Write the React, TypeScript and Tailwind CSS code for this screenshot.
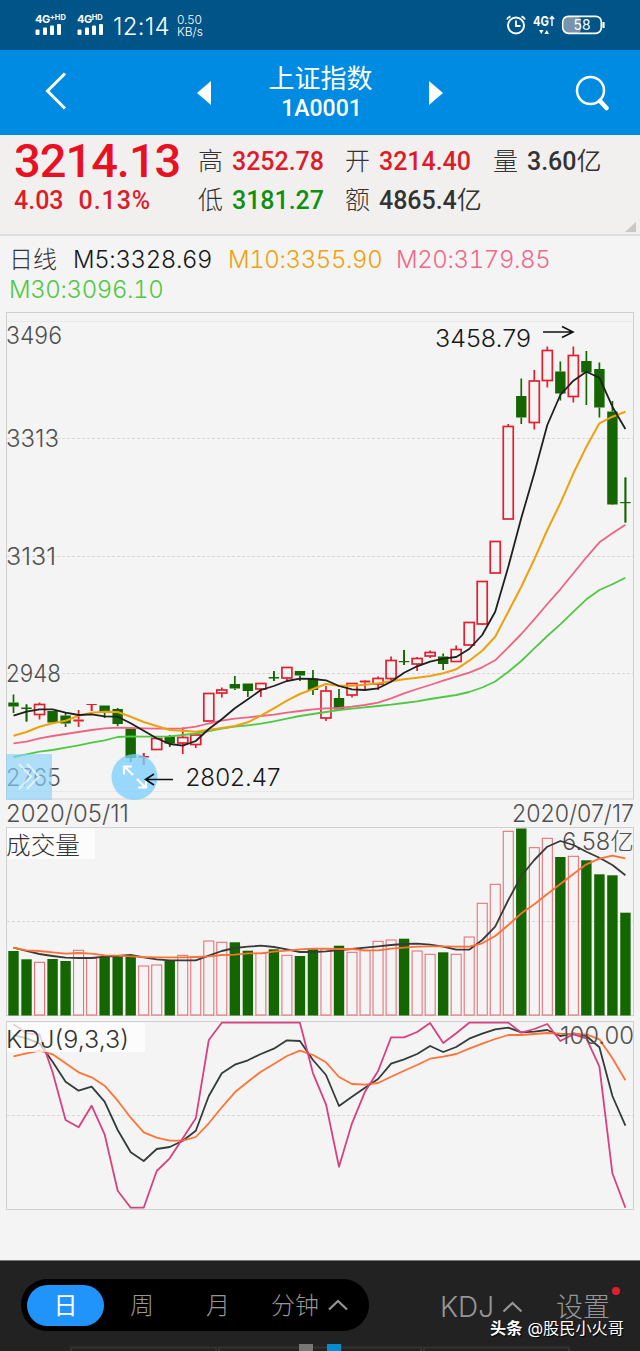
import React from 'react';

const STEP = 13.02;
const xAt = (i: number) => 13.5 + i * STEP;

type Kind = 'g' | 'r';
// [kind, body top, body bottom, high, low]
const candles: [Kind, number, number, number, number][] = [
  ['g', 702.5, 706.5, 694.5, 713], ['g', 707.5, 709, 704.5, 721.5], ['r', 704.5, 714.5, 702.5, 719.5],
  ['g', 711, 722.5, 711, 722.5], ['g', 715.5, 723.5, 712.5, 727], ['r', 719.5, 721.5, 710, 727],
  ['r', 704, 705, 704, 711], ['g', 705.5, 712.5, 705.5, 718], ['g', 709, 724, 708, 726],
  ['g', 728.5, 758, 728.5, 762], ['r', 756, 757.5, 753, 765], ['r', 738.5, 749.5, 738.5, 749.5],
  ['g', 736.5, 743.5, 735, 747], ['r', 737.5, 743, 727.5, 754], ['r', 735, 744.5, 735, 748],
  ['r', 693.5, 721, 693.5, 721], ['r', 690, 693, 687.5, 697.5], ['g', 684, 688.5, 676, 690],
  ['g', 683.5, 691, 683.5, 697], ['r', 683.5, 689, 683.5, 697], ['g', 677, 678.5, 671, 681],
  ['r', 667.5, 678, 667, 681], ['g', 671, 675.5, 671, 681], ['g', 678.5, 690, 670, 695],
  ['r', 691, 718, 686, 721], ['g', 698, 709.5, 689, 709.5], ['r', 683.5, 695, 683.5, 697.5],
  ['r', 680.5, 682.5, 680, 690.5], ['r', 678.5, 684, 676.5, 690], ['r', 660.5, 678.5, 656.5, 682],
  ['g', 661, 662.2, 650, 665], ['r', 658.5, 664, 657, 671], ['r', 652.5, 656, 650.5, 658],
  ['g', 656.5, 664, 653.5, 670], ['r', 649.5, 661.5, 645.5, 661.5], ['r', 622.5, 645, 622.5, 645],
  ['r', 581.5, 624, 581.5, 625], ['r', 541.5, 573, 541.5, 573], ['r', 426.5, 519, 424, 519],
  ['g', 396, 417.5, 378.5, 424], ['r', 381, 422.5, 370, 429.5], ['r', 350.5, 380.5, 346.5, 387.5],
  ['g', 371.5, 393.5, 361.5, 400.5], ['r', 355.5, 396.5, 346.5, 402.5], ['g', 361, 372.5, 351, 405],
  ['g', 369, 407.5, 362.5, 417.5], ['g', 411.5, 504.5, 401, 505], ['g', 502, 503.2, 477.5, 522.5],
];

const ma5 = [715.7, 711.7, 709.3, 709.3, 712.7, 715, 714.3, 716.3, 716.7, 723.3, 730.7, 738.3, 744, 745.7, 741, 729, 719.3, 708.3, 699.3, 690, 686, 681, 678.7, 679, 680.3, 686, 689.3, 690, 688.3, 681.7, 672.7, 666.3, 661.7, 658.7, 657, 649, 635, 611.7, 566.7, 518, 473.3, 425, 395, 380.7, 371.7, 377.7, 406.7, 429];
const ma10 = [735.7, 732, 726.7, 723.3, 720.7, 715.7, 712.7, 711.7, 712, 716.7, 722, 726, 730, 730.7, 731.7, 729.8, 728, 726, 722.3, 715.7, 708.3, 700.7, 694, 689, 684, 685.7, 685.7, 684.7, 683.3, 681.3, 679.3, 677.7, 676, 673.3, 669.3, 660.7, 650.7, 636.7, 611.7, 586.7, 559.3, 530, 503.3, 473.3, 446.7, 423.3, 416.7, 411.7];
const ma20 = [743.3, 741.7, 738.3, 736, 734, 732, 730, 728.3, 727.7, 728, 728.3, 728.7, 728.7, 728.3, 726.7, 723.5, 720.7, 718.7, 717.3, 716, 714.7, 712.7, 711, 709.3, 708.3, 708, 706.7, 705, 702.7, 698.3, 693.3, 689, 685, 680.7, 676.7, 672.7, 667.3, 660.3, 647.3, 634, 619.3, 604, 589.3, 573.3, 557.3, 542.3, 533.3, 524.7];
const ma30 = [757, 754.3, 751.7, 750, 747.7, 745.3, 742.7, 740.3, 737, 736.3, 736.7, 736.7, 736.3, 735, 733.5, 731, 728.7, 726.7, 725.3, 723.7, 721.3, 718.7, 716, 714, 712, 710, 708.7, 707.3, 706, 704.7, 703, 701.3, 699, 697, 695, 692, 687.5, 681.5, 671.7, 661, 648.3, 636, 624.3, 611.7, 599.3, 590, 584.3, 577.7];

const vol = [951, 959.3, 962.3, 959, 961, 950.3, 958.3, 957, 957, 957, 966, 965, 960.3, 955.3, 956.7, 941, 942.3, 942.3, 950.7, 953.3, 949.3, 955.3, 956, 949.3, 949, 945.7, 952.3, 950.7, 941.3, 940, 938.7, 951, 954.3, 952.3, 954.3, 937, 903.3, 884.3, 831.3, 828.5, 847.7, 838.3, 857, 856.3, 860.3, 874.3, 875.3, 912.7];
const volMa5 = [947.7, 951, 954, 956, 957.7, 958, 958, 956.7, 956, 955, 957.3, 959.3, 960.3, 960.3, 960.3, 955.7, 951, 948, 946.7, 945.7, 947, 949.3, 952, 952, 951.3, 950, 949, 947.7, 946.3, 945, 944, 943.7, 944.7, 946.7, 949.7, 949.7, 940, 926.7, 900, 876, 860, 846.7, 841, 845, 851.7, 857.7, 865, 875.3];
const volMa10 = [947.7, 950.3, 951, 952.3, 953.7, 953, 953.7, 955.3, 955.7, 956.3, 957, 957.3, 957.3, 957.3, 957, 956.3, 955, 954.7, 953.3, 953.3, 951.7, 950.7, 949.3, 948.7, 948.7, 949, 949, 950.3, 950.3, 948.7, 947.7, 946.7, 946.3, 946.3, 946.7, 946.7, 943.3, 936, 925, 913.3, 904.3, 894, 884, 874, 864.3, 858.7, 855.7, 858.3];

// Heights in thirds of a pixel, measured from y = 1015
const k = [60, 70, 85, 140, 200, 227, 215, 260, 345, 412, 438, 402, 396, 377, 347, 243, 175, 149, 136, 117, 101, 76, 78, 135, 180, 273, 245, 218, 192, 146, 133, 117, 93, 111, 96, 71, 56, 43, 38, 52, 50, 45, 63, 55, 63, 97, 243, 332];
const d = [124, 115, 107, 118, 145, 172, 187, 212, 257, 308, 352, 368, 377, 377, 366, 325, 277, 232, 200, 170, 147, 123, 107, 120, 142, 186, 207, 209, 204, 185, 167, 150, 131, 125, 117, 101, 86, 72, 60, 60, 57, 54, 56, 57, 58, 73, 130, 196];
const j = [28, 55, 58, 172, 315, 337, 272, 358, 527, 578, 578, 468, 430, 370, 310, 75, 23, 23, 23, 23, 23, 23, 23, 175, 268, 455, 325, 230, 168, 67, 67, 51, 24, 84, 55, 23, 23, 23, 23, 53, 42, 27, 78, 58, 70, 155, 475, 578];
const kdjY = (v: number) => 1015 + v / 3;

const GREEN = '#146600';
const RED = '#e0202f';

function Line({ ys, color, w = 1.8 }: { ys: number[]; color: string; w?: number }) {
  return <polyline points={ys.map((y, i) => `${xAt(i).toFixed(1)},${y.toFixed(1)}`).join(' ')} fill="none" stroke={color} strokeWidth={w} strokeLinejoin="round" />;
}

function Frame({ y, h, grid }: { y: number; h: number; grid: number[] }) {
  return (
    <>
      <rect x="6.5" y={y} width="627" height={h} fill="none" stroke="#d0d0d0" />
      {grid.map((g) => <line key={g} x1="7" x2="633" y1={g} y2={g} stroke="#d8d8d8" strokeDasharray="3 2" />)}
    </>
  );
}

function Label({ x, y, w, fill = '#505050', children, size = 24 }: { x: number; y: number; w: number; fill?: string; children: string; size?: number }) {
  return <text x={x} y={y} fontSize={size} fill={fill} textLength={w} lengthAdjust="spacingAndGlyphs">{children}</text>;
}

function PriceChart() {
  return (
    <svg className="block h-[517px] w-[640px] font-light" viewBox="0 310 640 517">
      <Frame y={312.5} h={486.5} grid={[438.5, 556.5, 673.5]} />
      <path d="M7 321.5H633M7 791.5H633" stroke="#e9e9e9" />
      <Label x={6} y={344} w={56}>3496</Label>
      <Label x={6} y={447} w={53}>3313</Label>
      <Label x={6} y={565} w={50}>3131</Label>
      <Label x={6} y={682} w={55}>2948</Label>
      <Label x={6} y={786} w={55}>2765</Label>
      {candles.map(([c, t, b, hi, lo], i) => {
        const x = xAt(i);
        const s = c === 'g' ? GREEN : RED;
        const hollow = c === 'r' && b - t > 2.6;
        return (
          <g key={i}>
            <path d={`M${x} ${hi}V${t}M${x} ${b}V${lo}`} stroke={s} strokeWidth="1.7" />
            {hollow
              ? <rect x={x - 5} y={t} width="10" height={b - t} fill="none" stroke={s} strokeWidth="1.7" />
              : <rect x={x - 5.2} y={t} width="10.4" height={b - t} fill={s} />}
            {b - t <= 1.6 && <path d={`M${x} ${hi}V${lo}`} stroke={s} strokeWidth="1.7" />}
          </g>
        );
      })}
      <Line ys={ma30} color="#50c843" />
      <Line ys={ma20} color="#ee6584" />
      <Line ys={ma10} color="#eda10c" w={2} />
      <Line ys={ma5} color="#202020" />
      <Label x={435} y={347} w={96} fill="#181818">3458.79</Label>
      <path d="M543 332H573M562 326.5L573 332L562 337.5" fill="none" stroke="#111" strokeWidth="1.6" />
      <Label x={185.5} y={786} w={95} fill="#181818">2802.47</Label>
      <rect x="6" y="754" width="46" height="46" fill="#8ad3fc" fillOpacity=".65" />
      <circle cx="134.5" cy="777" r="23" fill="#7dd0fd" fillOpacity=".78" />
      <path d="M19 764L31 776.5L19 789M27 764L39 776.5L27 789" fill="none" stroke="#e9f7ff" strokeWidth="2" strokeOpacity=".8" />
      <path d="M125 767L133 775M137 779L145 787M124 774.5V766.5H132M146 779.5V787.5H138" fill="none" stroke="#fff" strokeWidth="2.2" />
      <path d="M173 779.5H146M154 774L145.5 779.5L154 785" fill="none" stroke="#111" strokeWidth="1.6" />
      <Label x={6} y={822} w={123}>2020/05/11</Label>
      <Label x={512} y={822} w={122}>2020/07/17</Label>
    </svg>
  );
}

function VolumeChart() {
  return (
    <svg className="block h-[192px] w-[640px] font-light" viewBox="0 827 640 192">
      <Frame y={827.5} h={188} grid={[921.5]} />
      <rect x="7" y="828" width="88" height="31" fill="#fff" fillOpacity=".75" />
      <Label x={6} y={854} w={74} fill="#333">成交量</Label>
      <Label x={562} y={850} w={72}>6.58亿</Label>
      {vol.map((t, i) => candles[i][0] === 'g'
        ? <rect key={i} x={xAt(i) - 5.2} y={t} width="10.4" height={1015.5 - t} fill={GREEN} />
        : <rect key={i} x={xAt(i) - 5} y={t} width="10" height={1015 - t} fill="none" stroke="#e5686e" />)}
      <Line ys={volMa5} color="#3a3a3a" />
      <Line ys={volMa10} color="#ff7033" />
    </svg>
  );
}

function KdjChart() {
  return (
    <svg className="block h-[241px] w-[640px] font-light" viewBox="0 1019 640 241">
      <Frame y={1021.5} h={188} grid={[1115.5]} />
      <Line ys={k.map(kdjY)} color="#343b3b" />
      <Line ys={d.map(kdjY)} color="#ff7436" />
      <Line ys={j.map(kdjY)} color="#d5427f" />
      <rect x="7" y="1023" width="138" height="29" fill="#fff" fillOpacity=".72" />
      <Label x={6} y={1048} w={123} fill="#333">KDJ(9,3,3)</Label>
      <Label x={560} y={1044} w={74}>100.00</Label>
    </svg>
  );
}

function Signal({ label, sup }: { label: string; sup: string }) {
  return (
    <div className="flex w-[36px] flex-col">
      <div className="flex h-[10px] text-[11px] leading-[10px] font-bold tracking-[-0.5px]">
        {label}<span className="text-[7.5px] leading-[7px] tracking-normal">{sup}</span>
      </div>
      <svg className="block h-[13px] w-[28px]" viewBox="0 0 28 13" fill="#fff">
        <rect x="0.500" y="5.500" width="4" height="5.500" rx="1" /><rect x="8" y="3.500" width="4" height="7.500" rx="1" />
        <rect x="15" y="1.500" width="4" height="9.500" rx="1" /><rect x="22" y="0" width="4" height="11" rx="1" />
      </svg>
    </div>
  );
}

function StatusBar() {
  return (
    <div className="flex h-[50px] items-center bg-[#005488] pl-[35px] text-white">
      <div className="flex w-[42px]"><Signal label="4G" sup="+HD" /></div>
      <Signal label="4G" sup="HD" />
      <div className="w-[64px] pt-[3px] text-[24px] leading-[26px] font-light tracking-[0.3px]">12:14</div>
      <div className="pt-px text-[12px] leading-[12px] font-light">0.50<br />KB/s</div>
      <svg className="ml-auto mr-[34px] block h-[24px] w-[102px]" viewBox="504 13 102 24" fill="none" stroke="#fff">
        <circle cx="516" cy="25.500" r="8" strokeWidth="2" />
        <path d="M516 20.500V26H520.500M507 19.500Q508 17 510.500 16.500M525 19.500Q524 17 521.500 16.500" strokeWidth="1.8" />
        <text x="533" y="26" fontSize="13" fontWeight="700" fill="#fff" stroke="none" textLength="16" lengthAdjust="spacingAndGlyphs">4G</text>
        <path d="M552 26V17M549.800 19L552 16.500L554.200 19" strokeWidth="1.4" />
        <path d="M539 30H543.500L541.300 34ZM544.500 34H549L546.800 30Z" fill="#fff" stroke="none" />
        <rect x="564" y="17" width="17" height="16" rx="4" fill="#7893ad" stroke="none" />
        <rect x="562.800" y="16.300" width="38.500" height="17" rx="5.500" strokeWidth="1.7" />
        <path d="M603.500 22V28" strokeWidth="2.2" />
        <text x="573.500" y="30" fontSize="14" fill="#fff" stroke="none" textLength="17" lengthAdjust="spacingAndGlyphs">58</text>
      </svg>
    </div>
  );
}

function NavBar() {
  return (
    <div className="flex h-[85px] items-center justify-between bg-[#008be2] pr-[31px] pl-[45px] text-white">
      <svg className="mb-[4px] block h-[38px] w-[24px]" viewBox="0 0 24 38" fill="none" stroke="#fff" strokeWidth="3"><path d="M20 1.500L2.500 19L20 36.500" /></svg>
      <div className="mr-[4px] flex w-[246px] items-center justify-between">
        <svg className="block h-[24px] w-[15px]" viewBox="0 0 15 24" fill="#fff"><path d="M0 12L14 0V24Z" /></svg>
        <div className="flex flex-col items-center pt-px pl-px">
          <div className="text-[26px] leading-[32px]">上证指数</div>
          <div className="pl-[2px] font-['Roboto'] text-[23px] leading-[28px] font-medium">1A0001</div>
        </div>
        <svg className="block h-[24px] w-[15px]" viewBox="0 0 15 24" fill="#fff"><path d="M15 12L1 0V24Z" /></svg>
      </div>
      <svg className="block h-[36px] w-[34px]" viewBox="0 0 34 36" fill="none" stroke="#fff"><circle cx="15.500" cy="15.500" r="13.500" strokeWidth="2.500" /><path d="M25 26L31.500 33" strokeWidth="4.500" strokeLinecap="round" /></svg>
    </div>
  );
}

function Stat({ name, value, unit, tone }: { name: string; value: string; unit?: string; tone: string }) {
  return (
    <div className="flex h-[39px] items-center">
      <span className="w-[34px] text-[25px] font-light text-[#333]">{name}</span>
      <span className={`font-['Roboto'] text-[25px] font-medium tracking-[-0.05px] ${tone}`}>{value}</span>
      {unit && <span className="text-[25px] font-[350] text-[#333]">{unit}</span>}
    </div>
  );
}

function Quote() {
  return (
    <div className="relative flex h-[101px] border-b-2 border-[#dedede] bg-[#f1f0ef] pt-[7px] whitespace-nowrap">
      <div className="w-[198px] pl-[14px] font-['Roboto'] font-medium text-[#e81123]">
        <div className="h-[39px] text-[47px] leading-[38px] tracking-[-1px]">3214.13</div>
        <div className="flex h-[39px] items-center gap-[15px] text-[25px] leading-[28px] text-[#dd1c2b]"><span>4.03</span><span className="tracking-[0.9px]">0.13%</span></div>
      </div>
      <div className="w-[147px]"><Stat name="高" value="3252.78" tone="text-[#dd1c2b]" /><Stat name="低" value="3181.27" tone="text-[#109010]" /></div>
      <div className="w-[148px]"><Stat name="开" value="3214.40" tone="text-[#dd1c2b]" /><Stat name="额" value="4865.4" unit="亿" tone="text-[#333]" /></div>
      <Stat name="量" value="3.60" unit="亿" tone="text-[#333]" />
      <svg className="absolute right-[4px] bottom-[2px] h-[10px] w-[11px]" viewBox="0 0 11 10"><path d="M11 0V10H0Z" fill="#c8c8c8" /></svg>
    </div>
  );
}

function Average({ name, value, tone }: { name: string; value: string; tone: string }) {
  return <span className={`tabular-nums tracking-[-0.4px] ${tone}`}>{name}:{value}</span>;
}

function Footer() {
  return (
    <div className="relative h-[91px] border-t border-[#777] bg-[#222] text-[#969696]">
      <div className="flex h-[91px] items-start pt-[18px] pl-[21px] font-light">
        <div className="flex h-[52px] w-[348px] items-center rounded-full bg-black pl-[6px] text-[24px]">
          <span className="flex h-[41px] w-[77px] items-center justify-center rounded-full bg-[#2094fa] pt-[2px] font-normal text-white">日</span>
          <span className="w-[76px] pt-[2px] text-center">周</span>
          <span className="w-[76px] pt-[2px] text-center">月</span>
          <span className="ml-[15px] pt-[2px]">分钟</span>
          <svg className="ml-[9px] h-[12px] w-[20px]" viewBox="0 0 20 12" fill="none" stroke="#969696" strokeWidth="2.2"><path d="M1 10.500L10 2L19 10.500" /></svg>
        </div>
        <div className="ml-[71px] flex h-[56px] items-center">
          <span className="w-[62px] text-[28px]">KDJ</span>
          <svg className="h-[12px] w-[21px]" viewBox="0 0 20 12" fill="none" stroke="#969696" strokeWidth="2.2"><path d="M1 10.500L10 2L19 10.500" /></svg>
          <span className="ml-[33px] pt-px text-[27px] leading-[30px]">设置</span>
        </div>
      </div>
      <span className="absolute top-[26px] left-[612px] h-[8px] w-[8px] rounded-full bg-[#e51c2c]" />
      <svg className="absolute top-0 left-0 h-[90px] w-[640px]" viewBox="0 1261 640 90">
        <path d="M71 1351V1347.500H216V1351M219 1351V1347.500H421V1351M424 1351V1347.500H569V1351" fill="none" stroke="#333" strokeWidth="2" />
        <rect x="299" y="1344" width="14" height="7" fill="#777" />
        <rect x="327" y="1344" width="14" height="7" fill="#078cce" />
      </svg>
      <div className="absolute top-[56px] left-[490px] flex items-center gap-[5px] text-[16.2px] leading-[22px] whitespace-nowrap text-white [text-shadow:1px_1px_1px_#000]">
        <span className="font-bold">头条</span><span>@股民小火哥</span>
      </div>
    </div>
  );
}

export default function App() {
  return (
    <div className="flex h-[1351px] w-[640px] flex-col overflow-hidden bg-[#f4f4f4] font-['Inter','Noto_Sans_CJK_SC',sans-serif]">
      <StatusBar />
      <NavBar />
      <Quote />
      <div className="h-[74px] pt-[9px] pl-[9px] text-[24px] leading-[30px] font-light whitespace-nowrap">
        <div className="flex">
          <span className="w-[64px] text-[#333]">日线</span>
          <div className="w-[155px]"><Average name="M5" value="3328.69" tone="text-[#181818]" /></div>
          <div className="w-[168px]"><Average name="M10" value="3355.90" tone="text-[#eda10c]" /></div>
          <Average name="M20" value="3179.85" tone="text-[#f0688a]" />
        </div>
        <Average name="M30" value="3096.10" tone="text-[#50c843]" />
      </div>
      <PriceChart />
      <VolumeChart />
      <KdjChart />
      <Footer />
    </div>
  );
}
